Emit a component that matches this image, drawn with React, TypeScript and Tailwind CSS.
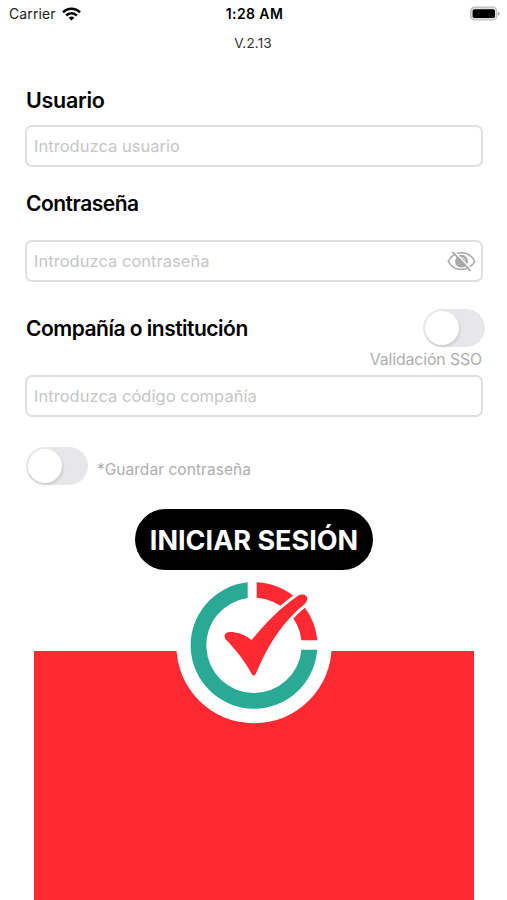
import React from "react";

function Toggle({ label }: { label: string }) {
  return (
    <button
      type="button"
      role="switch"
      aria-checked={false}
      aria-label={label}
      className="flex h-[38px] w-[62px] shrink-0 items-center rounded-full bg-[#e7e7e9] pl-[2px]"
    >
      <span className="size-[34px] rounded-full bg-white shadow-[1px_2px_3px_rgba(0,0,0,0.12)]" />
    </button>
  );
}

function Field({ placeholder, type = "text", children }: { placeholder: string; type?: string; children?: React.ReactNode }) {
  return (
    <div className="flex h-[42px] w-[458px] shrink-0 items-center rounded-[7px] border-2 border-[#e0e0e1] pr-1 pb-px pl-[7px]">
      <input
        type={type}
        placeholder={placeholder}
        className="min-w-0 flex-1 bg-transparent text-[16.5px] leading-5 tracking-[0.03px] outline-none placeholder:text-[#c6c6c8]"
      />
      {children}
    </div>
  );
}

function Wifi() {
  return (
    <svg className="ml-[6px] h-[14px] w-[19px]" viewBox="0 0 19 14" fill="none" stroke="#000" strokeWidth="2.5">
      <path d="M1 5.3C5.8.4 13.2.4 18 5.3" />
      <path d="M4.1 8.5c3.1-3 7.7-3 10.8 0" />
      <path d="M6.6 10.7c1.7-1.5 4.1-1.5 5.8 0L9.5 13.6z" fill="#000" stroke="none" />
    </svg>
  );
}

function Battery() {
  return (
    <svg className="h-[15px] w-[32px]" viewBox="0 0 32 15">
      <rect x="1.6" y="1.2" width="26.2" height="12.8" rx="4" fill="#ddd" stroke="#bbb" strokeWidth="1.2" />
      <rect x="3.6" y="3.2" width="22.4" height="8.8" rx="1.8" fill="#000" />
      <path d="M29 5.4c2.3 1 2.3 3.4 0 4.4z" fill="#aaa" />
    </svg>
  );
}

function HiddenEye() {
  return (
    <svg className="h-[22px] w-[30px] shrink-0" viewBox="0 0 30 22" fill="none" stroke="#a9a9a9" strokeWidth="1.5">
      <path d="M1.2 11.3C7.2 0 21.8 0 27.8 11.3C21.8 22.2 7.2 22.2 1.2 11.3Z" />
      <circle cx="14.5" cy="11.2" r="6.4" fill="#a9a9a9" stroke="none" />
      <path d="M14.3 7.7c2 0 3.4 1.2 3.6 3.1" stroke="#fff" strokeWidth=".9" />
      <path d="M6.7 1.1 24.9 19.9" stroke="#fff" strokeWidth="1.5" />
      <path d="M5.4 1.8 23.6 20.8" strokeWidth="1.7" />
    </svg>
  );
}

function Logo() {
  return (
    <svg className="absolute -top-[81px] left-[131px] h-[165px] w-[180px]" viewBox="0 0 540 495">
      <circle cx="267" cy="227" r="233" fill="#fff" />
      <path d="M248 37A190 190 0 1 0 456.5 239H409.3A143 143 0 1 1 248 84.3Z" fill="#2aaa94" />
      <path d="M275 36.5A190 190 0 0 1 456.5 211H409.3A143 143 0 0 0 275 83.5Z" fill="#ff2932" />
      <path
        d="M181 207C173 190 188 184 207 187C228 190 245 199 260 210C300 161 344 115 398 78C415 67 431 77 426 91C422 103 408 111 397 121C341 174 306 232 272 312C269 318 264 318 260 312C241 276 215 242 181 207Z"
        fill="#ff2932"
        stroke="#fff"
        strokeWidth="18"
        strokeLinejoin="round"
        paintOrder="stroke"
      />
    </svg>
  );
}

export default function App() {
  return (
    <main className="flex h-[900px] w-[507px] flex-col overflow-hidden bg-white font-['Inter','Liberation_Sans',sans-serif] text-black">
      <header className="grid h-7 shrink-0 grid-cols-3 items-center pr-[6px] pb-px pl-[9px] text-[14px]">
        <div className="flex items-center tracking-[0.1px] text-[#222]">
          Carrier
          <Wifi />
        </div>
        <div className="-ml-px text-center font-semibold tracking-[0.4px]">1:28 AM</div>
        <div className="flex justify-end">
          <Battery />
        </div>
      </header>
      <p className="mt-[5px] mb-px h-5 shrink-0 pr-px text-center text-[13.5px] leading-5 tracking-[0.15px] text-[#333]">V.2.13</p>

      <form className="flex flex-col pl-[25px]" onSubmit={(e) => e.preventDefault()}>
        <label className="mt-8 h-7 pl-px text-[21.5px] leading-7 font-semibold tracking-[-0.3px]">Usuario</label>
        <div className="mt-[11px] flex">
          <Field placeholder="Introduzca usuario" />
        </div>
        <label className="mt-[23px] h-7 pl-px text-[21px] leading-7 font-semibold tracking-[-0.5px]">Contraseña</label>
        <div className="mt-[22px] flex">
          <Field placeholder="Introduzca contraseña" type="password">
            <HiddenEye />
          </Field>
        </div>
        <div className="mt-[27px] flex w-[460px] items-center justify-between">
          <label className="pt-px pl-px text-[21px] leading-7 font-semibold tracking-[-0.5px]">Compañía o institución</label>
          <Toggle label="Validación SSO" />
        </div>
        <p className="mt-px h-[27px] w-[457px] text-right text-[15.8px] leading-6 tracking-[-0.1px] text-[#aeaeb0]">Validación SSO</p>
        <Field placeholder="Introduzca código compañía" />
        <div className="mt-[30px] flex items-center pl-px">
          <Toggle label="Guardar contraseña" />
          <span className="mt-[7px] ml-[9px] text-[15.5px] leading-5 tracking-[0.05px] text-[#aeaeb0]">*Guardar contraseña</span>
        </div>
        <button
          type="submit"
          className="mt-[24px] ml-[110px] flex h-[61px] w-[238px] items-center justify-center rounded-full bg-black pt-[3px] text-[27px] font-bold whitespace-nowrap text-white"
        >
          INICIAR SESIÓN
        </button>
      </form>

      <section className="relative mt-[81px] ml-[34px] w-[440px] flex-1 bg-[#ff2932]">
        <Logo />
      </section>
    </main>
  );
}
